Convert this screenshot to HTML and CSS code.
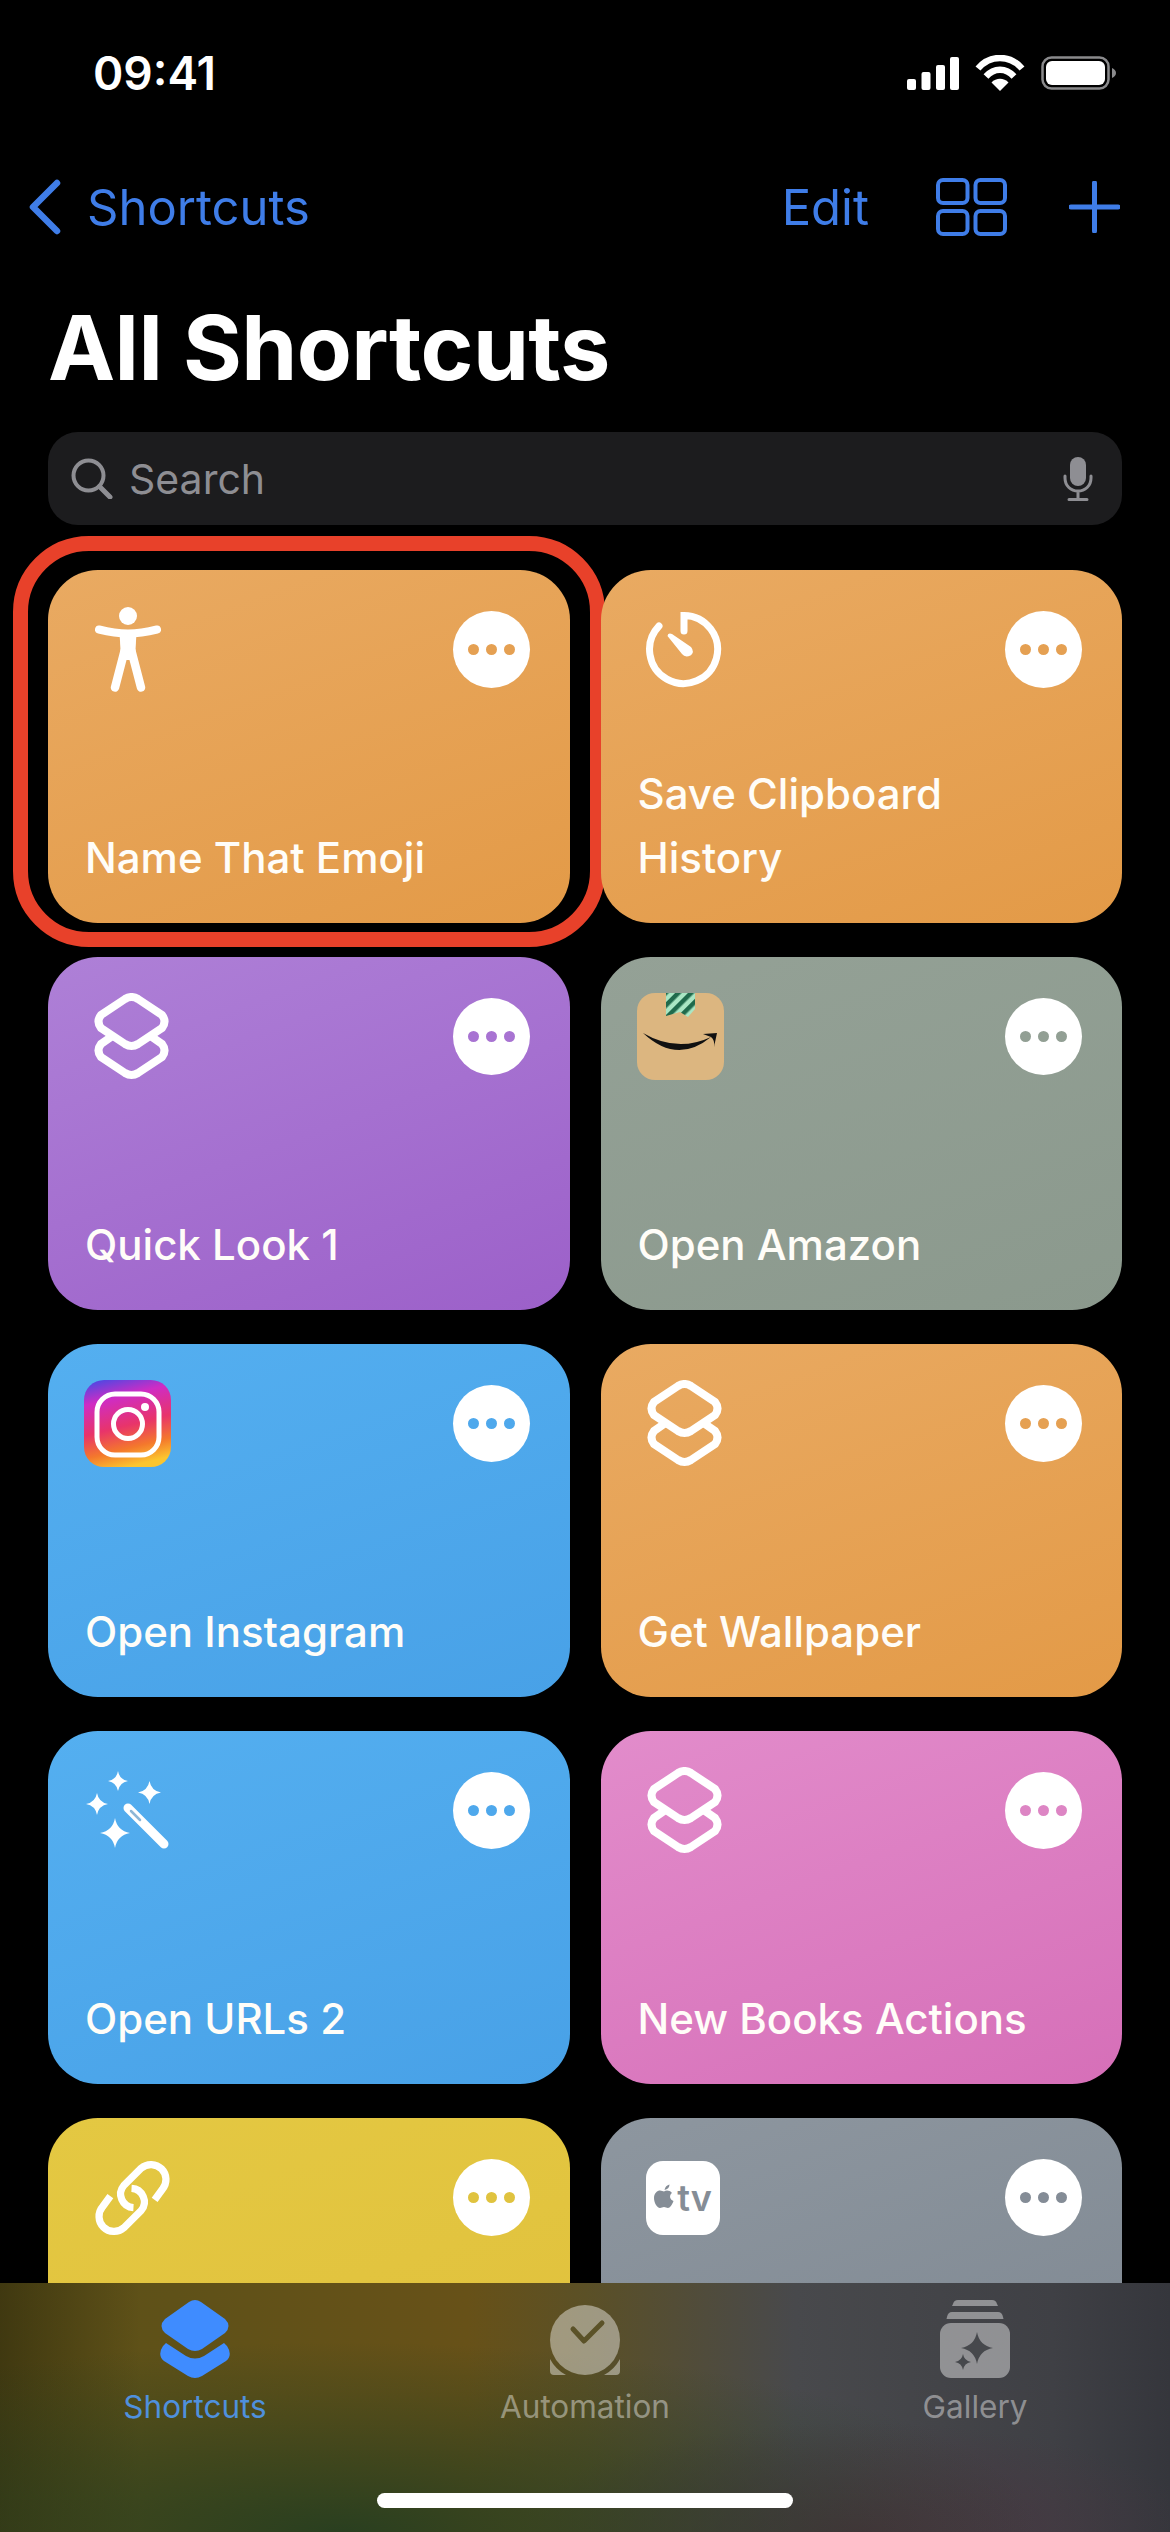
FILE: index.html
```html
<!DOCTYPE html>
<html lang="en">
<head>
    <meta charset="UTF-8">
    <title>All Shortcuts</title>
    <link rel="stylesheet" href="styles.css">
</head>

<body>
<svg class="defs" width="0" height="0">
    <defs>
        <symbol id="stack" viewBox="0 0 77 87">
            <g fill="none" stroke="#fff" stroke-width="8" stroke-linecap="round">
                <path d="M32 6Q38.5 2 45 6L69 22Q74 28.5 69 35L45 51Q38.5 55 32 51L8 35Q3 28.5 8 22Z"/>
                <path d="M18 44L8 51Q3 57.5 8 64L32 80Q38.5 84 45 80L69 64Q74 57.5 69 51L59 44"/>
            </g>
        </symbol>
        <symbol id="sparkle" viewBox="-10 -10 20 20">
            <path d="M0-10Q1.5-1.5 10 0Q1.5 1.5 0 10Q-1.5 1.5-10 0Q-1.5-1.5 0-10Z"/>
        </symbol>
        <linearGradient id="ig-base" x1=".25" y1="0" x2=".5" y2="1">
            <stop offset="0" stop-color="#5a45e0"/>
            <stop offset=".22" stop-color="#cf2cc4"/>
            <stop offset=".55" stop-color="#e8346a"/>
            <stop offset=".8" stop-color="#f4782c"/>
            <stop offset="1" stop-color="#fbc52f"/>
        </linearGradient>
        <pattern id="tape" width="9" height="9" patternUnits="userSpaceOnUse" patternTransform="rotate(45)">
            <rect width="9" height="9" fill="#a9e6c4"/>
            <rect width="4.5" height="9" fill="#1f6a4c"/>
        </pattern>
    </defs>
</svg>

<div class="status">
    <div class="clock">09:41</div>
    <div class="status-icons">
        <svg class="signal" viewBox="0 0 52 33">
            <rect x="0" y="22" width="9" height="11" rx="2"/>
            <rect x="14.5" y="15" width="9" height="18" rx="2"/>
            <rect x="29" y="8" width="9" height="25" rx="2"/>
            <rect x="43" y="0" width="9" height="33" rx="2"/>
        </svg>
        <svg class="wifi" viewBox="0 0 50 36">
            <g fill="none" stroke="#fff" stroke-width="6.5">
                <path d="M3 13.5C15-.5 35-.5 47 13.5"/>
                <path d="M11 21.5C19 12.5 31 12.5 39 21.5"/>
            </g>
            <path d="M25 36L16.5 27.5C21 22.5 29 22.5 33.5 27.5Z" fill="#fff"/>
        </svg>
        <svg class="battery" viewBox="0 0 75 34">
            <rect x="1.5" y="1.5" width="66" height="31" rx="9" fill="none" stroke="#8a8a8c" stroke-width="2.5"/>
            <rect x="5" y="5" width="59" height="24" rx="6" fill="#fff"/>
            <path d="M71 12Q75 14 75 17Q75 20 71 22Z" fill="#8a8a8c"/>
        </svg>
    </div>
</div>

<div class="nav">
    <svg class="back" viewBox="0 0 34 56">
        <path d="M29 4L5 28L29 52" fill="none" stroke="currentColor" stroke-width="6.5" stroke-linecap="round" stroke-linejoin="round"/>
    </svg>
    <div class="nav-back">Shortcuts</div>
    <div class="nav-edit">Edit</div>
    <svg class="view-grid" viewBox="0 0 71 58">
        <g fill="none" stroke="currentColor" stroke-width="4">
            <rect x="2" y="2" width="29.5" height="23" rx="5"/>
            <rect x="39.5" y="2" width="29.5" height="23" rx="5"/>
            <rect x="2" y="33" width="29.5" height="23" rx="5"/>
            <rect x="39.5" y="33" width="29.5" height="23" rx="5"/>
        </g>
    </svg>
    <svg class="plus" viewBox="0 0 51 52">
        <path d="M25.5 2V50M2 26H49" fill="none" stroke="currentColor" stroke-width="5" stroke-linecap="round"/>
    </svg>
</div>

<h1 class="title">All Shortcuts</h1>

<div class="search">
    <svg class="search-glass" viewBox="0 0 42 41">
        <circle cx="17.5" cy="17.5" r="15" fill="none" stroke="currentColor" stroke-width="4"/>
        <path d="M28.5 28.5L39 39" fill="none" stroke="currentColor" stroke-width="5" stroke-linecap="round"/>
    </svg>
    <div class="search-text">Search</div>
    <svg class="search-mic" viewBox="0 0 30 44">
        <rect x="7" y="0" width="16" height="29" rx="8" fill="currentColor"/>
        <path d="M2 19V21C2 29 8 34 15 34C22 34 28 29 28 21V19M15 34V42M6 42.5H24" fill="none" stroke="currentColor" stroke-width="3" stroke-linecap="round"/>
    </svg>
</div>

<div class="grid">
    <div class="card orange marked">
        <div class="card-top">
            <div class="card-icon">
                <svg class="i-person" viewBox="0 0 66 85">
                    <circle cx="33" cy="9" r="9" fill="#fff"/>
                    <path d="M4 22.5Q20 26.5 33 26.5Q46 26.5 62 22.5" fill="none" stroke="#fff" stroke-width="8" stroke-linecap="round"/>
                    <path d="M24.5 25H41.5L40 53H26Z" fill="#fff"/>
                    <path d="M29.5 44L20 80.500M36.500 44L46 80.500" fill="none" stroke="#fff" stroke-width="8.500" stroke-linecap="round"/>
                </svg>
            </div>
            <div class="more"><span></span><span></span><span></span></div>
        </div>
        <div class="card-name">Name That Emoji</div>
    </div>

    <div class="card orange">
        <div class="card-top">
            <div class="card-icon">
                <svg class="i-timer" viewBox="0 0 77 77">
                    <path d="M38 20V4.5A34 34 0 1 1 13 15" fill="none" stroke="#fff" stroke-width="7" stroke-linecap="round"/>
                    <path d="M21.5 25Q22 21.5 26 23L45 36Q49 41 44.5 44.5Q39 47 36 43Z" fill="#fff"/>
                </svg>
            </div>
            <div class="more"><span></span><span></span><span></span></div>
        </div>
        <div class="card-name">Save Clipboard<br>History</div>
    </div>

    <div class="card purple">
        <div class="card-top">
            <div class="card-icon"><svg class="i-stack"><use href="#stack"/></svg></div>
            <div class="more"><span></span><span></span><span></span></div>
        </div>
        <div class="card-name">Quick Look 1</div>
    </div>

    <div class="card sage">
        <div class="card-top">
            <div class="card-icon">
                <svg class="i-app" viewBox="0 0 87 87">
                    <rect width="87" height="87" rx="18" fill="#dcb680"/>
                    <path d="M29 0H58V16L51 24L43 19L29 23Z" fill="url(#tape)"/>
                    <path d="M6 40Q40 72 74 44Q40 60 6 40Z" fill="#111"/>
                    <path d="M66 41L80 40L77 54Q78 47 74 44Z" fill="#111"/>
                </svg>
            </div>
            <div class="more"><span></span><span></span><span></span></div>
        </div>
        <div class="card-name">Open Amazon</div>
    </div>

    <div class="card blue">
        <div class="card-top">
            <div class="card-icon">
                <svg class="i-app" viewBox="0 0 87 87">
                    <rect width="87" height="87" rx="20" fill="url(#ig-base)"/>
                    <rect x="13" y="14" width="62" height="61" rx="18" fill="none" stroke="#fff" stroke-width="5"/>
                    <circle cx="44" cy="44" r="14.5" fill="none" stroke="#fff" stroke-width="5"/>
                    <circle cx="61" cy="27" r="4" fill="#fff"/>
                </svg>
            </div>
            <div class="more"><span></span><span></span><span></span></div>
        </div>
        <div class="card-name">Open Instagram</div>
    </div>

    <div class="card orange">
        <div class="card-top">
            <div class="card-icon"><svg class="i-stack"><use href="#stack"/></svg></div>
            <div class="more"><span></span><span></span><span></span></div>
        </div>
        <div class="card-name">Get Wallpaper</div>
    </div>

    <div class="card blue">
        <div class="card-top">
            <div class="card-icon">
                <svg class="i-wand" viewBox="0 0 83 79" fill="#fff">
                    <use href="#sparkle" x="22" y="0" width="20" height="20"/>
                    <use href="#sparkle" x="52" y="10" width="23" height="23"/>
                    <use href="#sparkle" x="0" y="22" width="22" height="22"/>
                    <use href="#sparkle" x="14" y="47" width="30" height="30"/>
                    <path d="M42 37L78 73" fill="none" stroke="#fff" stroke-width="9" stroke-linecap="round"/>
                    <path d="M45 40L54 49" fill="none" stroke="#8fb7d6" stroke-width="2.5" stroke-linecap="round"/>
                </svg>
            </div>
            <div class="more"><span></span><span></span><span></span></div>
        </div>
        <div class="card-name">Open URLs 2</div>
    </div>

    <div class="card pink">
        <div class="card-top">
            <div class="card-icon"><svg class="i-stack"><use href="#stack"/></svg></div>
            <div class="more"><span></span><span></span><span></span></div>
        </div>
        <div class="card-name">New Books Actions</div>
    </div>

    <div class="card yellow">
        <div class="card-top">
            <div class="card-icon">
                <svg class="i-link" viewBox="0 0 80 80">
                    <g fill="none" stroke="#fff" stroke-width="7.5">
                        <path d="M63 42L71 31A15.600 15.600 0 0 0 49 9L31 27A14 14 0 0 0 41 50"/>
                        <path d="M17 38L9 49A15.600 15.600 0 0 0 31 71L49 53A14 14 0 0 0 39 30"/>
                    </g>
                </svg>
            </div>
            <div class="more"><span></span><span></span><span></span></div>
        </div>
    </div>

    <div class="card slate">
        <div class="card-top">
            <div class="card-icon">
                <div class="tv-tile">
                    <svg class="tv-apple" viewBox="0 0 20 24">
                        <path d="M10.5 6C11 3 13 1 15.5 .5C15.5 3.500 13.500 5.500 10.500 6Z"/>
                        <path d="M10 7.500C12 6 15.500 6 18 9C15 11 15.500 15.500 19.500 17C18 21 16 24 14 24C12.500 24 11.500 23 10 23C8.500 23 7.500 24 6 24C3 24 0 18.500 0 14C0 9 3.500 6.500 6 6.500C7.500 6.500 9 7.500 10 7.500Z"/>
                    </svg>
                    <span>tv</span>
                </div>
            </div>
            <div class="more"><span></span><span></span><span></span></div>
        </div>
    </div>
</div>

<div class="tabbar">
    <div class="tabs">
        <div class="tab active">
            <svg class="tab-icon" viewBox="-2 0 74 80">
                <path d="M29 3Q35 -1 41 3L65 20Q72 27 65 34L42 50Q35 54 28 50L5 34Q-2 27 5 20Z" fill="#3f8cff"/>
                <path d="M6 44L26 57Q35 62 44 57L64 44L67 47Q73 56 66 62L42 77Q35 81 28 77L4 62Q-3 56 3 47Z" fill="#3f8cff"/>
            </svg>
            <div class="tab-label">Shortcuts</div>
        </div>
        <div class="tab">
            <svg class="tab-icon" viewBox="-2 -6 74 80">
                <circle cx="35" cy="35" r="35" fill="currentColor"/>
                <path d="M0 54A38 38 0 0 0 16 70H4Q0 70 0 66ZM70 54A38 38 0 0 1 54 70H66Q70 70 70 66Z" fill="currentColor"/>
                <path d="M23 24L34 36L52 18" fill="none" stroke="#5b5228" stroke-width="5" stroke-linecap="round" stroke-linejoin="round"/>
            </svg>
            <div class="tab-label">Automation</div>
        </div>
        <div class="tab">
            <svg class="tab-icon" viewBox="-2 0 74 80">
                <path d="M13 5Q14 1 18 1H52Q56 1 57 5L58 7H12Z" fill="currentColor"/>
                <path d="M7 18Q8 13 12 13H58Q62 13 63 18L63.500 20H6.500Z" fill="currentColor"/>
                <rect x="0" y="24" width="70" height="55" rx="11" fill="currentColor"/>
                <g fill="#46484c">
                    <use href="#sparkle" x="21" y="33" width="32" height="32"/>
                    <use href="#sparkle" x="15" y="55" width="16" height="16"/>
                </g>
            </svg>
            <div class="tab-label">Gallery</div>
        </div>
    </div>
    <div class="home-bar"></div>
</div>
</body>
</html>
```

FILE: styles.css
```css
* {
    box-sizing: border-box;
}

body {
    position: relative;
    width: 1170px;
    height: 2532px;
    margin: 0;
    overflow: hidden;
    background-color: #000;
    color: #fff;
    font-family: Inter, "Liberation Sans", sans-serif;
}

svg {
    display: block;
}

.defs {
    position: absolute;
}

/* status bar */
.status {
    display: flex;
    align-items: center;
    justify-content: space-between;
    height: 146px;
    padding: 0 54px 0 93px;
}

.clock {
    font-size: 46px;
    font-weight: 600;
}

.status-icons {
    display: flex;
    align-items: center;
    gap: 16px;
}

.signal {
    width: 52px;
    height: 33px;
    fill: #fff;
}

.wifi {
    width: 50px;
    height: 36px;
}

.battery {
    width: 75px;
    height: 34px;
}

/* nav */
.nav {
    display: flex;
    align-items: center;
    height: 122px;
    padding: 0 50px 0 28px;
    color: #3f7de8;
    font-size: 49px;
}

.back {
    width: 34px;
    height: 56px;
}

.nav-back {
    margin-left: 25px;
}

.nav-edit {
    margin-left: auto;
}

.view-grid {
    width: 71px;
    height: 58px;
    margin-left: 67px;
}

.plus {
    width: 51px;
    height: 52px;
    margin-left: 62px;
}

.title {
    height: 164px;
    margin: 0;
    padding-left: 48px;
    font-size: 90px;
    font-weight: 700;
    line-height: 160px;
    letter-spacing: -.6px;
}

/* search */
.search {
    display: flex;
    align-items: center;
    height: 93px;
    margin: 0 48px 45px;
    padding: 0 29px 0 23px;
    border-radius: 30px;
    background-color: #1c1c1e;
    color: #8e8e93;
}

.search-glass {
    width: 42px;
    height: 41px;
}

.search-text {
    margin-left: 16px;
    font-size: 41px;
}

.search-mic {
    width: 30px;
    height: 44px;
    margin-left: auto;
}

/* shortcut cards */
.grid {
    display: grid;
    grid-template-columns: 1fr 1fr;
    grid-auto-rows: 353px;
    gap: 34px 31px;
    padding: 0 48px;
}

.card {
    position: relative;
    display: flex;
    flex-direction: column;
    justify-content: space-between;
    padding: 36px 40px 33px 36px;
    border-radius: 50px;
}

.card.marked::after {
    content: "";
    position: absolute;
    top: -34px;
    right: -35px;
    bottom: -24px;
    left: -35px;
    border: 15px solid #e8412a;
    border-radius: 76px;
}

.orange {
    --tint: #e5a052;
    background: linear-gradient(160deg, #e9aa62, #e39a47);
}

.purple {
    --tint: #a873d2;
    background: linear-gradient(160deg, #ae80d7, #9c60c9);
}

.sage {
    --tint: #929f94;
    background: linear-gradient(160deg, #94a196, #8b998d);
}

.blue {
    --tint: #4ea8ec;
    background: linear-gradient(160deg, #54aff0, #48a1e7);
}

.pink {
    --tint: #dd85c4;
    background: linear-gradient(160deg, #e28ccb, #d66fb8);
}

.yellow {
    --tint: #e0c33f;
    background: linear-gradient(160deg, #e4c842, #e0c03c);
}

.slate {
    --tint: #848c96;
    background: linear-gradient(160deg, #8d969f, #7e8791);
}

.card-top {
    display: flex;
    align-items: center;
    justify-content: space-between;
}

.card-icon {
    display: flex;
    align-items: center;
    justify-content: center;
    width: 87px;
    height: 87px;
}

.more {
    display: flex;
    align-items: center;
    justify-content: center;
    gap: 7px;
    width: 77px;
    height: 77px;
    border-radius: 50%;
    background-color: #fff;
}

.more span {
    width: 11px;
    height: 11px;
    border-radius: 50%;
    background-color: var(--tint);
}

.card-name {
    margin-left: 1px;
    color: #fffdf8;
    font-size: 42px;
    font-weight: 500;
    line-height: 64px;
}

.i-person {
    width: 66px;
    height: 85px;
}

.i-timer {
    width: 77px;
    height: 77px;
    margin-left: 8px;
}

.i-stack {
    width: 77px;
    height: 87px;
    margin-left: 8px;
}

.i-app {
    width: 87px;
    height: 87px;
}

.i-wand {
    width: 83px;
    height: 79px;
}

.i-link {
    width: 80px;
    height: 80px;
    margin-left: 10px;
}

.tv-tile {
    display: flex;
    flex-shrink: 0;
    align-items: center;
    justify-content: center;
    gap: 3px;
    width: 74px;
    height: 74px;
    margin-left: 6px;
    border-radius: 17px;
    background-color: #fff;
    color: #858d96;
    font-size: 36px;
    font-weight: 600;
}

.tv-apple {
    width: 20px;
    height: 24px;
    margin-top: -4px;
    fill: #858d96;
}

/* tab bar */
.tabbar {
    position: absolute;
    right: 0;
    bottom: 0;
    left: 0;
    display: flex;
    flex-direction: column;
    height: 249px;
    background:
        radial-gradient(700px 190px at 340px 100%, rgba(38, 62, 32, .95), transparent),
        radial-gradient(340px 110px at 860px 100%, #47343f, transparent),
        linear-gradient(90deg, rgba(20, 20, 5, .4), transparent 12%),
        linear-gradient(90deg, #5d5118 0, #5f5118 15%, #675118 40%, #5b5026 50%, #48494c 68%, #3f4045 90%, #35363c 100%);
}

.tabs {
    display: grid;
    grid-template-columns: repeat(3, 1fr);
    padding-top: 16px;
}

.tab {
    display: flex;
    flex-direction: column;
    align-items: center;
    color: rgba(255, 255, 255, .42);
}

.tab.active {
    color: #4f90dd;
}

.tab-icon {
    width: 74px;
    height: 80px;
}

.tab-label {
    margin-top: 10px;
    font-size: 31.5px;
    line-height: 36px;
}

.home-bar {
    align-self: center;
    width: 416px;
    height: 15px;
    margin-top: auto;
    margin-bottom: 24px;
    border-radius: 8px;
    background-color: #fff;
}
```
